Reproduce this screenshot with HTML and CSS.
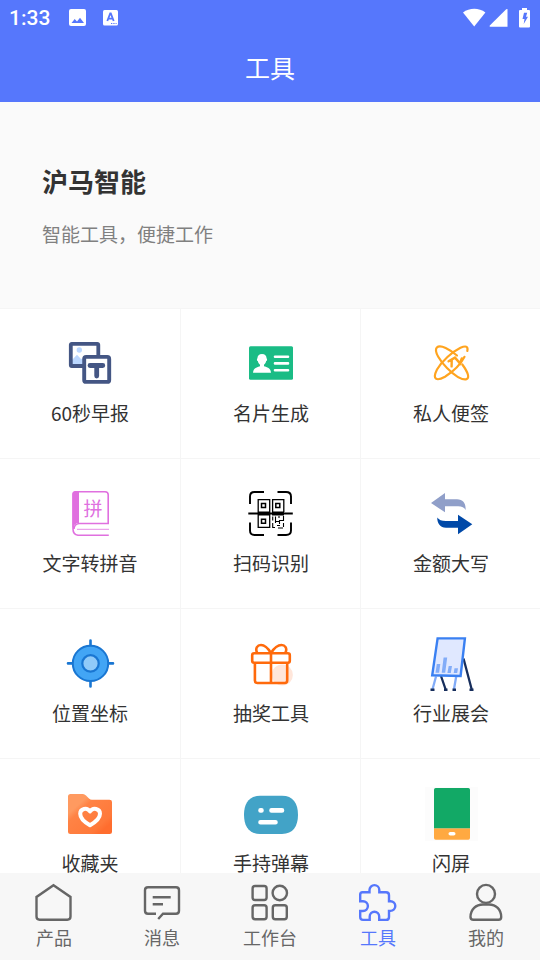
FILE: index.html
```html
<!DOCTYPE html>
<html lang="zh-CN">
<head>
<meta charset="utf-8">
<meta name="viewport" content="width=device-width, initial-scale=1">
<title>工具</title>
<link rel="stylesheet" href="styles.css">
</head>
<body>
<header class="top">
  <div class="status">
    <span class="time">1:33</span>
    <div class="notices">
      <svg width="18" height="18" viewBox="0 0 18 18"><rect y="0" width="17" height="17" rx="2" fill="#fff"/><path d="M2.500 14l3.200-4 2.300 2.600L11 8.700l4 5.300z" fill="#5677fc"/></svg>
      <svg width="18" height="18" viewBox="0 0 18 18"><rect y="1" width="15" height="15.500" rx="1.500" fill="#fff"/><path d="M4.300 12L7.200 4.500h.6L10.700 12M5.200 9.700h4.600" fill="none" stroke="#5677fc" stroke-width="1.800"/><path d="M8 14.500h1.300m1 0h1.300m1 0h1" stroke="#5677fc" stroke-width="1.200"/></svg>
    </div>
    <div class="signals">
      <svg width="24" height="20" viewBox="0 0 24 20"><path d="M0 4.600C6.500-.4 16-.4 22.400 4.600L11.200 18.600z" fill="#fff"/></svg>
      <svg width="20" height="20" viewBox="0 0 20 20"><path d="M18.500 1v17.700H1.200Q0 18.500 .8 17.500L17.200 1.300z" fill="#fff"/></svg>
      <svg width="12" height="20" viewBox="0 0 12 20"><path d="M3 0h5v2h2q1 0 1 1v15.500q0 1-1 1H1q-1 0-1-1V3q0-1 1-1h2z" fill="#fff"/><path d="M5 4.700h3.200L7 8.700h2L4.700 16l.8-5H3.500z" fill="#5677fc"/></svg>
    </div>
  </div>
  <h1 class="page-title">工具</h1>
</header>

<main class="content">
  <section class="hero">
    <h2 class="hero-title">沪马智能</h2>
    <p class="hero-text">智能工具，便捷工作</p>
  </section>
  <section class="tiles">
    <a class="tile" href="#">
      <svg class="tile-icon" viewBox="0 0 54 54"><circle cx="16.300" cy="13" r="2.700" fill="#bbd7ff"/><path d="M9 28v-5l5-5.200 4 4.200 3-1v7z" fill="#bbd7ff"/><path d="M35.300 19V7.800q0-1-1-1H8.800q-1 0-1 1V28q0 1 1 1H20" fill="none" stroke="#445684" stroke-width="3.800"/><rect x="21.200" y="19.900" width="25" height="25" rx="2" fill="#fff" stroke="#445684" stroke-width="3.900"/><path d="M27 28.500h12.800M33.700 29v10" stroke="#445684" stroke-width="4.800" stroke-linecap="round"/></svg>
      <span class="tile-label">60秒早报</span>
    </a>
    <a class="tile" href="#">
      <svg class="tile-icon" viewBox="0 0 54 54"><rect x="5" y="9.300" width="44" height="33.500" rx="1.500" fill="#1abc85"/><path d="M18 17c-3.200 0-4.700 2-4.500 4.300-.9.200-.7 2.600.3 2.700.4 1.800 1.200 3 2.200 3.700v1.600c-3 1-6.700 1.800-7 6.400h18c-.3-4.600-4-5.400-7-6.400v-1.600c1-.7 1.800-1.900 2.200-3.700 1-.1 1.200-2.500.3-2.700.2-2.300-1.300-4.300-4.500-4.300z" fill="#fff"/><path d="M31 19.700h13M31 26.400h13M31 33.300h13" stroke="#fff" stroke-width="2.600" stroke-linecap="round"/></svg>
      <span class="tile-label">名片生成</span>
    </a>
    <a class="tile" href="#">
      <svg class="tile-icon" viewBox="0 0 54 54"><g fill="none" stroke="#ffa41f" stroke-width="2.200" stroke-linecap="round"><path d="M43.300 14C44.500 9 41.500 8.600 36.500 10.800C28 15 18 24 13 32.500C8 42.500 12.500 44.500 21 39.700C29.500 34.500 36.500 27.500 40.500 19.800"/><path d="M38.300 27.500C43.500 34.500 46.500 41.500 42 42.300C37 43 28.500 36.500 23 31C16.500 24.500 9.500 14.500 12.800 10.500C16.500 7 26 12.500 33 18.500"/><path d="M24.600 24.300l6.400-3.700M27.700 23.200l-.1 6.200M31 20.600l5 5.800 1.800-5" stroke-width="2.400"/></g></svg>
      <span class="tile-label">私人便签</span>
    </a>
    <a class="tile" href="#">
      <svg class="tile-icon" viewBox="0 0 54 54"><g fill="none" stroke="#e070df" stroke-width="1.600"><path d="M45.800 48.300H15Q10 47.500 10 42V7q0-2.200 3-2.200h29q3.200 0 3.200 3V36.500H16q-5 .8-5 5.500"/><path d="M14 42.300h32" stroke-width=".8"/></g><path d="M9.500 41V7q.5-2.800 4-3v32.500q-3 1-4 4.500z" fill="#e070df"/><path d="M14.500 5v31" stroke="#e070df" stroke-width="3"/><text class="book-text" x="30" y="29" text-anchor="middle">拼</text></svg>
      <span class="tile-label">文字转拼音</span>
    </a>
    <a class="tile" href="#">
      <svg class="tile-icon" viewBox="0 0 54 54"><g fill="none" stroke="#000"><path d="M6 17V9.500Q6 5 10.500 5H20M33.500 5H42q5 0 5 4.500V17M6 35.500V43.500Q6 48 10.500 48H20M33.500 48H42q5 0 5-4.500V35.500" stroke-width="1.900"/><path d="M4.300 26.400h44.500" stroke-width="2"/><path d="M14.200 12.700h11.500v27.600H14.200zM28.600 25V12.700h11.200V25" stroke-width="1.300"/><path d="M17.500 16.500h4v4h-4zM17.500 32.300h4v4h-4zM31.800 16.500h4v4h-4z" stroke-width="1.500"/><path d="M28.700 29.500v4M28.700 36v4.500h2.300M31.500 29.500V36M33 38.500h3M34 41h5M39.500 29v4.500h-4V37M39.500 36v4M35 29v2M31 34.500h4" stroke-width="1.100"/></g><path d="M14 24.500h12v4H14zM28 24.500h12v4H28z"/></svg>
      <span class="tile-label">扫码识别</span>
    </a>
    <a class="tile" href="#">
      <svg class="tile-icon" viewBox="0 0 54 54"><path d="M7 16L21 6v6.300h12c6 0 9 4 8.600 10.700-1.500-2.500-3.500-3.700-7.600-3.700H21v6z" fill="#909fc9"/><path d="M48.300 37.300L34 27.700V34H22c-4.500 0-7-1-8.700-3.500-.3 6 3 10.200 8.700 10.200h12v6.600z" fill="#0049a8"/></svg>
      <span class="tile-label">金额大写</span>
    </a>
    <a class="tile" href="#">
      <svg class="tile-icon" viewBox="0 0 54 54"><path d="M27.500 3.500v46M5 26.400h45" stroke="#1976d2" stroke-width="2.600" stroke-linecap="round"/><circle cx="27.500" cy="26.400" r="17.700" fill="#42a5f5" stroke="#1976d2" stroke-width="2"/><circle cx="27.500" cy="26.400" r="8.200" fill="#90caf9" stroke="#1976d2" stroke-width="2.200"/></svg>
      <span class="tile-label">位置坐标</span>
    </a>
    <a class="tile" href="#">
      <svg class="tile-icon" viewBox="0 0 54 54"><circle cx="38.300" cy="38" r="10.600" fill="#ffe6da"/><g fill="none" stroke="#ff6a0c" stroke-width="2.600"><rect x="8.200" y="16.200" width="37.600" height="9.600" rx="2"/><path d="M10.900 26v17.500q0 2.500 2.500 2.500h27.300q2.500 0 2.500-2.500V26M27 16v30M13 15.500C11 11 13.500 8 17 8c4 0 7.500 4 10 8 2.500-4 6-8 10.500-8 3.500 0 6 3 4 7.500"/></g></svg>
      <span class="tile-label">抽奖工具</span>
    </a>
    <a class="tile" href="#">
      <svg class="tile-icon" viewBox="0 0 54 54"><path d="M39.500 21.500L48 53.500M17 39l5 14.500" stroke="#172e5c" stroke-width="2.300"/><path d="M12 39.500L8.600 52M32.200 39.500L30 52" stroke="#82acf8" stroke-width="2.300"/><path d="M6.500 52.800h4M28.500 52.800h3.500M20 52.800h3.500M45.500 52.800h4" stroke="#172e5c" stroke-width="2.400"/><path d="M13.600 1.400h27.300L36.600 39 8.200 38.300z" fill="#e0e8ff" stroke="#3a80f2" stroke-width="2.400"/><path d="M12.800 27h3.500l-1.200 8.800h-3.600zM19.600 20.500h3.600l-2 15.300h-3.500zM24.700 29H28l-1.200 6.900h-3.400zM30.500 31.300h3.500l-.8 4.700h-3.500z" fill="#82acf8"/></svg>
      <span class="tile-label">行业展会</span>
    </a>
    <a class="tile" href="#">
      <svg class="tile-icon" viewBox="0 0 54 54"><defs><linearGradient id="folder" x1="0" y1="0" x2="1" y2="1"><stop offset=".25" stop-color="#ff9a60"/><stop offset=".35" stop-color="#ff8345"/><stop offset=".75" stop-color="#ff793a"/><stop offset=".85" stop-color="#ff6d2e"/></linearGradient></defs><path d="M7.500 7H20q1.500 0 3 1.500l3 3q1.200 1.200 3 1.200h17.500Q49 12.700 49 15v29.500q0 2.500-2.500 2.500h-39Q5 47 5 44.500v-35Q5 7 7.500 7z" fill="url(#folder)"/><path d="M27 38.300c-4-2.300-9.800-7-9.800-11.500 0-5.300 6.800-6.800 9.800-2.300 3-4.500 10-3 10 2.300 0 4.500-6 9.200-10 11.500z" fill="none" stroke="#fff" stroke-width="4" stroke-linejoin="round"/></svg>
      <span class="tile-label">收藏夹</span>
    </a>
    <a class="tile" href="#">
      <svg class="tile-icon" viewBox="0 0 54 54"><path d="M16 8.800h22c11 0 16 7.500 16 19s-5 19.200-16 19.200H16C5 47 0 39.300 0 27.800S5 8.800 16 8.800z" fill="#42a3c7"/><path d="M16.500 23.400h1M27.500 23.400h10.500M16.500 35.200h15" stroke="#fff" stroke-width="4.600" stroke-linecap="round"/></svg>
      <span class="tile-label">手持弹幕</span>
    </a>
    <a class="tile" href="#">
      <svg class="tile-icon" viewBox="0 0 54 54"><rect x="1" width="53" height="54" fill="#fcfcfc"/><path d="M10 41.300h36V51q0 1.700-1.700 1.700H11.700Q10 52.700 10 51z" fill="#ffa941"/><path d="M10 41.300V2.700Q10 1 11.700 1h32.600Q46 1 46 2.700v38.600z" fill="#12a966"/><rect x="24.500" y="45" width="7" height="3.600" rx="1.800" fill="#fff"/></svg>
      <span class="tile-label">闪屏</span>
    </a>
  </section>
</main>

<nav class="tabs">
  <a class="tab" href="#">
    <svg class="tab-icon" viewBox="0 0 40 40"><path d="M19.500 2.300L36.500 14V33.500q0 3.200-3.200 3.200H5.700q-3.200 0-3.200-3.200V14z"/></svg>
    <span>产品</span>
  </a>
  <a class="tab" href="#">
    <svg class="tab-icon" viewBox="0 0 40 40"><path d="M14 30.700H6q-3 0-3-3V7.300q0-3 3-3h28q3 0 3 3v20.400q0 3-3 3H21L16.200 36M10.700 14.300h18M10.700 21.300H21"/></svg>
    <span>消息</span>
  </a>
  <a class="tab" href="#">
    <svg class="tab-icon" viewBox="0 0 40 40"><rect x="2.600" y="3" width="14" height="14" rx="2.500"/><rect x="2.600" y="22.200" width="14" height="14" rx="2.500"/><rect x="22.800" y="22.200" width="14" height="14" rx="2.500"/><circle cx="29.800" cy="10" r="7.200"/></svg>
    <span>工作台</span>
  </a>
  <a class="tab tab-active" href="#" aria-current="page">
    <svg class="tab-icon" viewBox="0 0 40 40"><path d="M4.500 9.300H11.500V7a4.900 4.900 0 0 1 9.800 0V9.300H28q3 0 3 3V18.300h1.500a4.800 4.800 0 0 1 0 9.600H31v6q0 3-3 3h-6.800V33.500a4.700 4.700 0 0 0-9.500 0v3.400H5q-2.800 0-2.800-2.800V28H5a4.900 4.900 0 0 0 0-9.800H2.200V11.800q0-2.500 2.300-2.500z"/></svg>
    <span>工具</span>
  </a>
  <a class="tab" href="#">
    <svg class="tab-icon" viewBox="0 0 40 40"><circle cx="20" cy="10.900" r="9"/><path d="M17 21.500h6C30 21.500 35.200 26.500 35.200 34q0 2.700-2.700 2.700h-25Q4.500 36.700 4.500 34C4.500 26.500 10 21.500 17 21.500z"/></svg>
    <span>我的</span>
  </a>
</nav>
</body>
</html>
```
FILE: styles.css
```css
* {
  box-sizing: border-box;
}

body {
  margin: 0;
  height: 100vh;
  display: flex;
  flex-direction: column;
  background: #fff;
  color: #333;
  font-family: "Noto Sans CJK SC", "Noto Sans", sans-serif;
}

a {
  color: inherit;
  text-decoration: none;
}

svg {
  display: block;
}

.top {
  background: #5677fc;
  color: #fff;
}

.status {
  display: flex;
  align-items: center;
  height: 36px;
  padding: 0 9px;
}

.time {
  font: 500 21px/36px Roboto, sans-serif;
}

.notices {
  display: flex;
  gap: 16px;
  margin-left: 19px;
}

.signals {
  display: flex;
  gap: 2px;
  margin-left: auto;
}

.signals svg:last-child {
  margin-left: 8px;
}

.page-title {
  margin: 0;
  padding-bottom: 4px;
  font-size: 25px;
  font-weight: 400;
  line-height: 62px;
  text-align: center;
}

.content {
  flex: 1;
  min-height: 0;
  overflow-y: auto;
  scrollbar-width: none;
}

.hero {
  padding: 59px 42px;
  background: #fafafa;
}

.hero-title {
  margin: 0 0 18px;
  font-size: 26px;
  font-weight: 700;
  line-height: 40px;
}

.hero-text {
  margin: 0;
  color: #808080;
  font-size: 19px;
  line-height: 30px;
}

.tiles {
  display: grid;
  grid-template-columns: repeat(3, 1fr);
}

.tile {
  display: flex;
  flex-direction: column;
  align-items: center;
  gap: 8px;
  padding: 28px 0 31px;
  border-top: 1px solid #f5f5f5;
}

.tile:not(:nth-child(3n + 1)) {
  padding-left: 1px;
  border-left: 1px solid #f5f5f5;
}

.tile-icon {
  width: 54px;
  height: 54px;
}

.tile-label {
  font-size: 19px;
  line-height: 28px;
}

.book-text {
  fill: #e070df;
  font-size: 19px;
}

.tabs {
  display: flex;
  background: #f7f7f7;
  color: #666;
}

.tab {
  flex: 1;
  display: flex;
  flex-direction: column;
  align-items: center;
  gap: 2px;
  padding: 10px 0 11px;
  font-size: 18px;
  line-height: 24px;
}

.tab-active {
  color: #5677fc;
}

.tab-icon {
  width: 40px;
  height: 40px;
  fill: none;
  stroke: currentColor;
  stroke-width: 2.400;
}
```
